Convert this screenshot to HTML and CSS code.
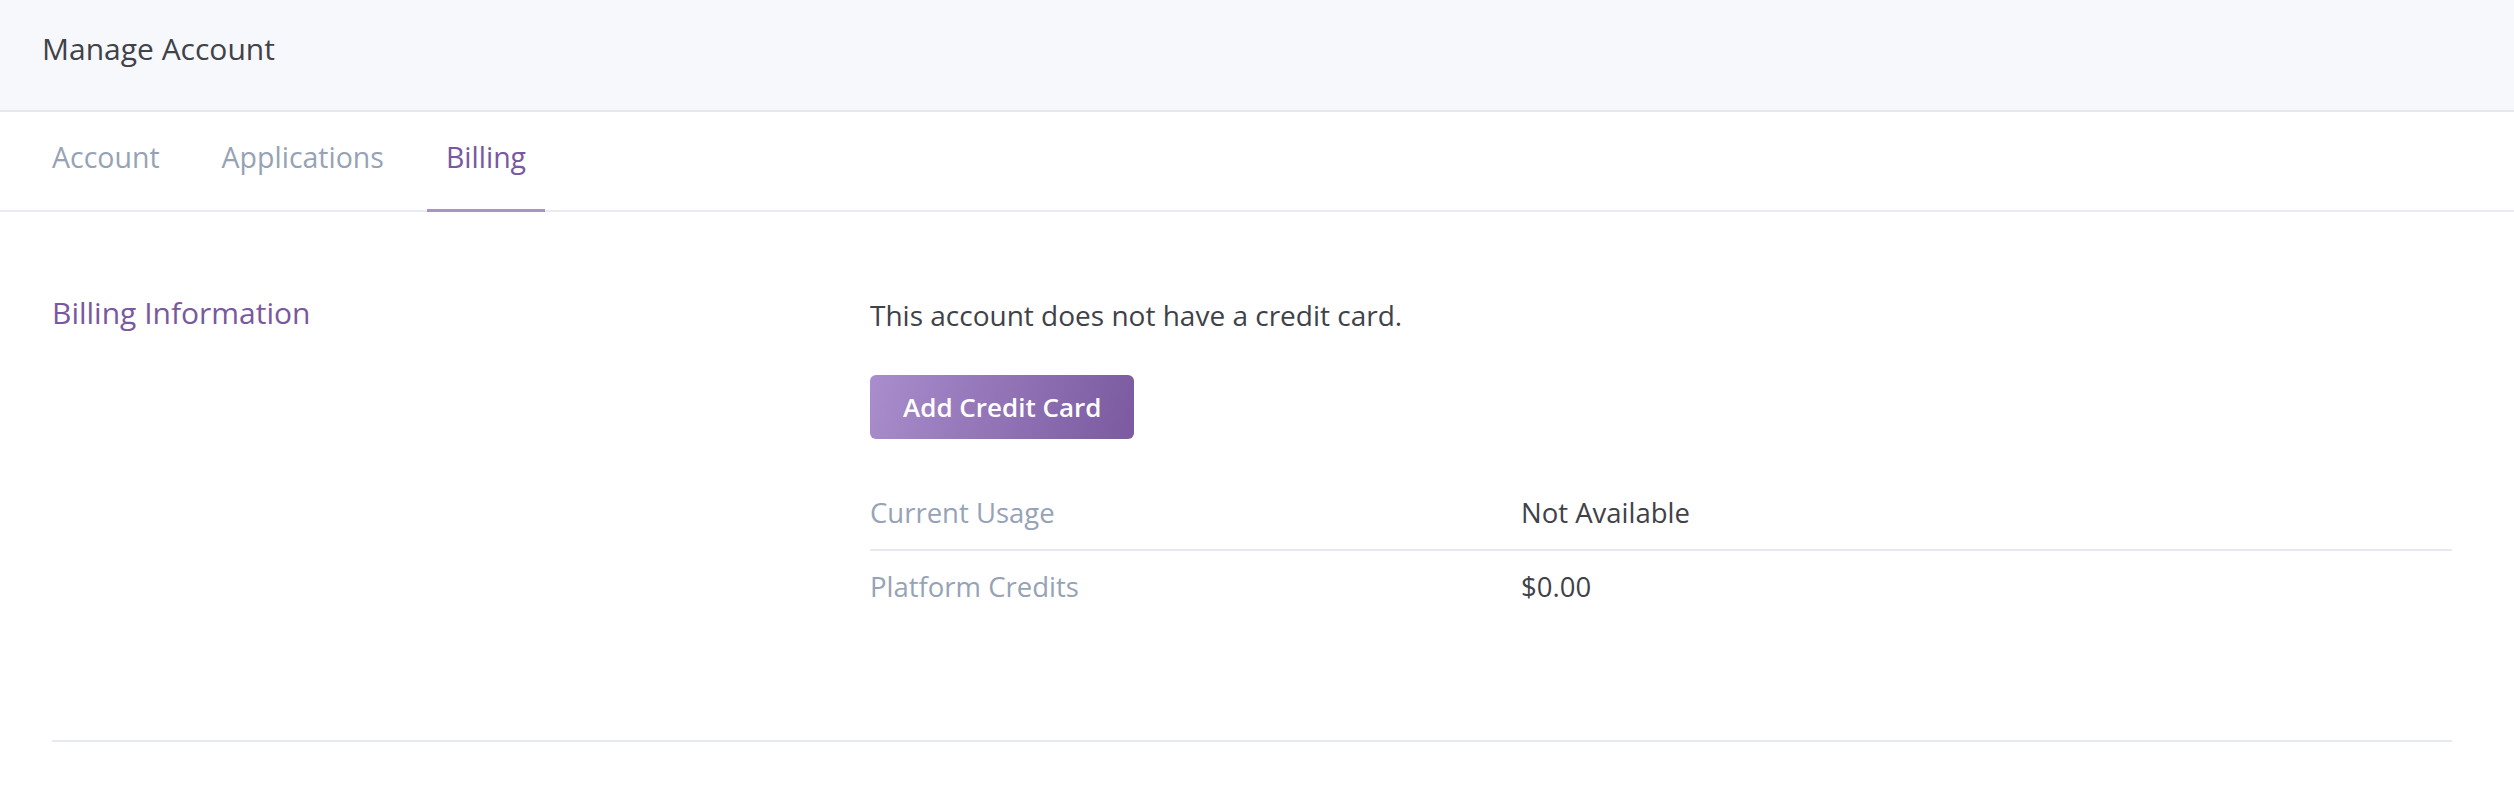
FILE: index.html
```html
<!DOCTYPE html>
<html lang="en">
<head>
<meta charset="utf-8">
<title>Manage Account</title>
<link rel="stylesheet" href="styles.css">
</head>
<body>
<header class="page-header">
  <h1 class="page-title">Manage Account</h1>
</header>
<nav class="tabs">
  <a class="tab" href="#">Account</a>
  <a class="tab" href="#">Applications</a>
  <a class="tab tab-active" href="#">Billing</a>
</nav>
<main class="content">
  <section class="section">
    <h2 class="section-title">Billing Information</h2>
    <div class="section-body">
      <p class="notice">This account does not have a credit card.</p>
      <button class="btn-primary" type="button">Add Credit Card</button>
      <dl class="info-list">
        <div class="info-row">
          <dt class="info-label">Current Usage</dt>
          <dd class="info-value">Not Available</dd>
        </div>
        <div class="info-row">
          <dt class="info-label">Platform Credits</dt>
          <dd class="info-value">$0.00</dd>
        </div>
      </dl>
    </div>
  </section>
</main>
</body>
</html>
```
FILE: styles.css
```css
* {
  box-sizing: border-box;
}

html, body {
  margin: 0;
  padding: 0;
  background: #ffffff;
}

body {
  font-family: "Open Sans", "Noto Sans", "Liberation Sans", sans-serif;
  color: #3f4249;
}

.page-header {
  height: 112px;
  background: #f7f8fb;
  border-bottom: 2px solid #e4e8f0;
  padding: 29px 0 0 42px;
}

.page-title {
  margin: 0;
  font-size: 30px;
  line-height: 40px;
  font-weight: 400;
  color: #3f4249;
}

.tabs {
  display: flex;
  gap: 24px;
  padding-left: 33px;
  border-bottom: 2px solid #e8ebf3;
  height: 100px;
}

.tab {
  display: block;
  height: 100px;
  margin-bottom: -2px;
  padding: 25px 19px 0;
  font-size: 28.5px;
  line-height: 40px;
  color: #96a3b6;
  text-decoration: none;
  border-bottom: 3px solid transparent;
}

.tab-active {
  color: #79589f;
  border-bottom-color: #a993c5;
}

.content {
  padding: 0 62px 0 52px;
}

.section {
  display: grid;
  grid-template-columns: 818px 1fr;
  padding: 81px 0 118px;
  border-bottom: 2px solid #e6e9f3;
}

.section-title {
  margin: 0;
  font-size: 30px;
  line-height: 40px;
  font-weight: 400;
  color: #79589f;
}

.section-body {
  display: flex;
  flex-direction: column;
  align-items: flex-start;
}

.notice {
  margin: 2px 0 0;
  font-size: 28px;
  line-height: 40px;
  color: #3f4249;
}

.btn-primary {
  margin-top: 40px;
  height: 64px;
  padding: 0 33px;
  border: 0;
  border-radius: 6px;
  background: linear-gradient(105deg, #a98dcc 0%, #9173b6 50%, #7b5aa0 100%);
  color: #ffffff;
  font-family: inherit;
  font-size: 26px;
  font-weight: 600;
  line-height: 64px;
  cursor: pointer;
}

.info-list {
  align-self: stretch;
  margin: 39px 0 0;
}

.info-row {
  display: grid;
  grid-template-columns: 651px 1fr;
  padding: 15px 0;
}

.info-row + .info-row {
  border-top: 2px solid #e6e9f3;
  padding-top: 16px;
}

.info-row:first-child {
  padding-bottom: 16px;
}

.info-label,
.info-value {
  margin: 0;
  font-size: 27.5px;
  line-height: 40px;
}

.info-label {
  color: #96a3b6;
}

.info-value {
  color: #3f4249;
}
```
